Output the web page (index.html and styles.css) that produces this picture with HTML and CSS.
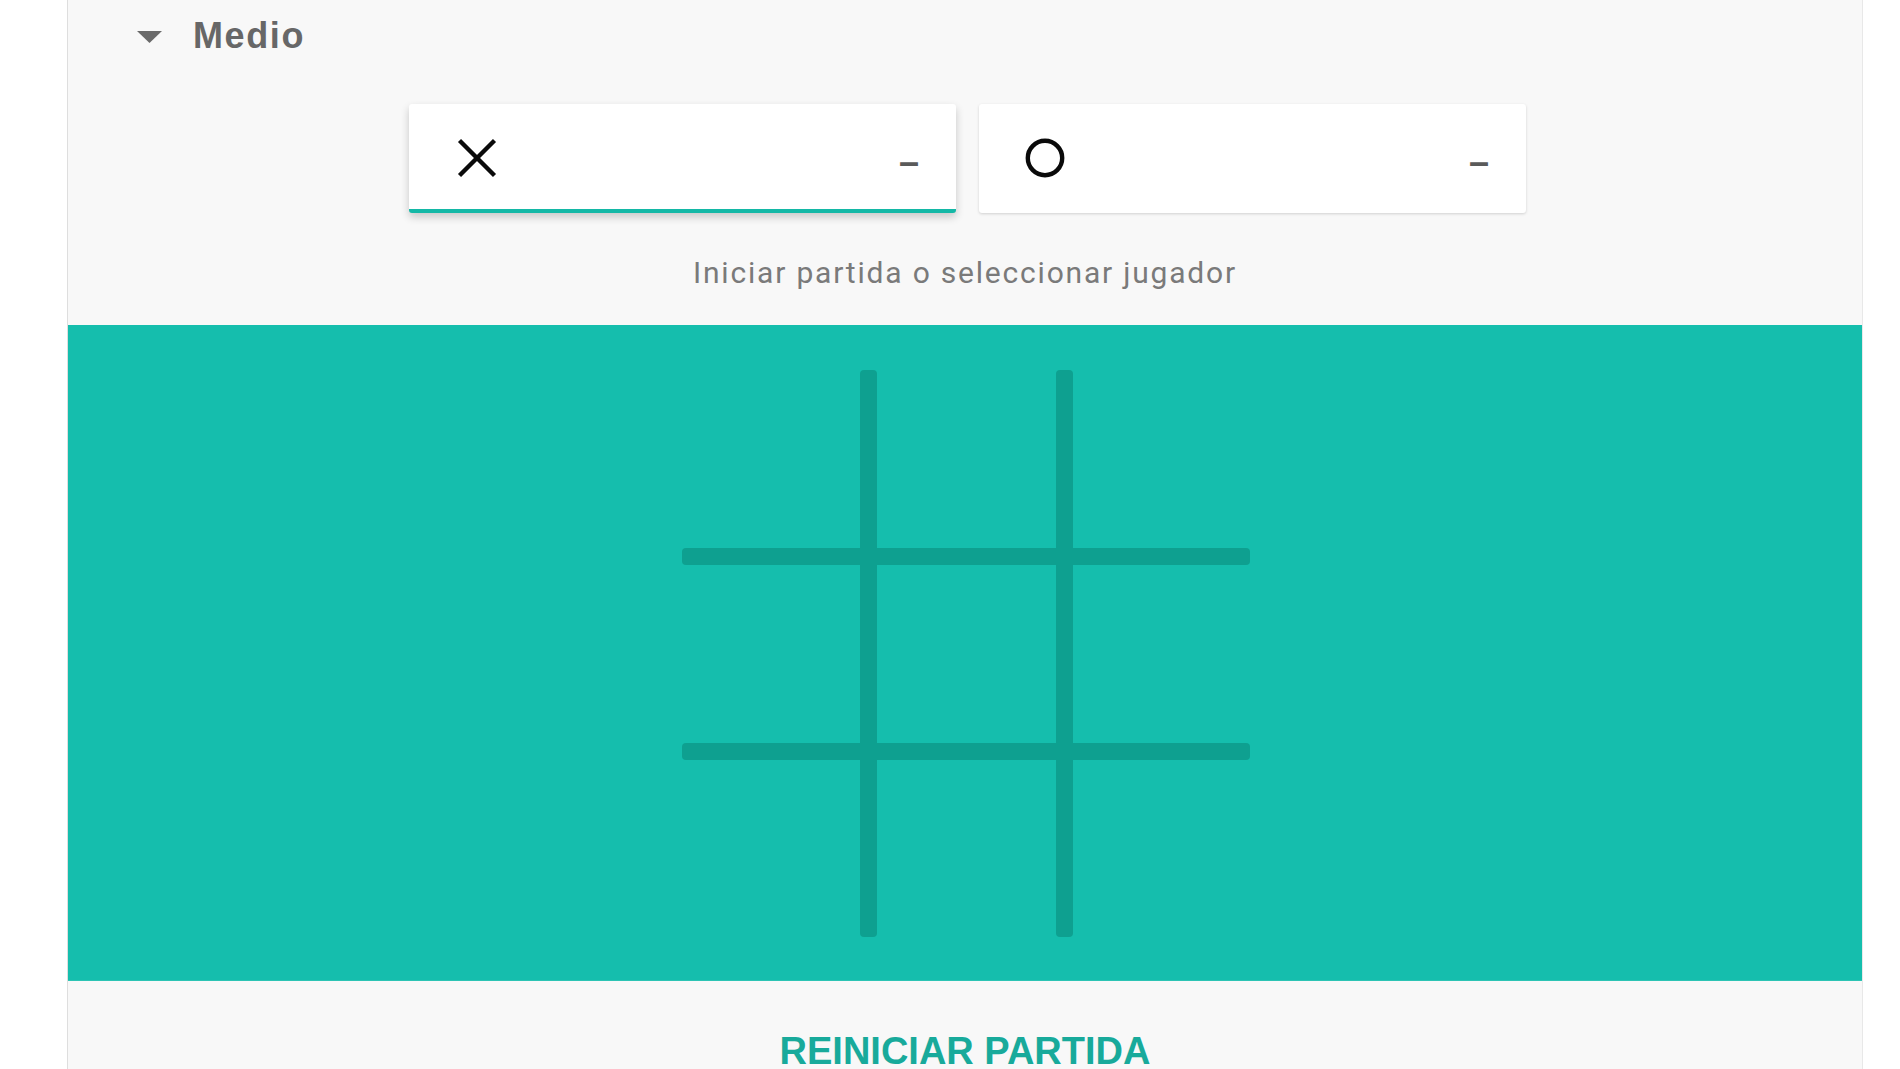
FILE: index.html
```html
<!DOCTYPE html>
<html lang="es">
<head>
<meta charset="utf-8">
<title>Tres en raya</title>
<link rel="stylesheet" href="styles.css">
</head>
<body>
<div class="panel">
  <div class="header">
    <svg class="caret" width="25" height="12" viewBox="0 0 25 12"><polygon points="0,0 25,0 12.5,12" fill="#6a6a6a"/></svg>
    <span class="level">Medio</span>
  </div>
  <div class="players">
    <div class="card active">
      <svg class="mark" width="40" height="40" viewBox="0 0 40 40"><line x1="2.5" y1="2.5" x2="37.5" y2="37.5" stroke="#0a0a0a" stroke-width="4.4"/><line x1="37.5" y1="2.5" x2="2.5" y2="37.5" stroke="#0a0a0a" stroke-width="4.4"/></svg>
      <span class="score">–</span>
    </div>
    <div class="card o">
      <svg class="mark" width="40" height="40" viewBox="0 0 40 40"><circle cx="20" cy="20" r="17.2" fill="none" stroke="#0a0a0a" stroke-width="4.4"/></svg>
      <span class="score">–</span>
    </div>
  </div>
  <div class="hint">Iniciar partida o seleccionar jugador</div>
  <div class="board">
    <svg class="grid" width="568" height="567" viewBox="0 0 568 567">
      <rect x="178" y="0" width="17" height="567" rx="4" fill="#0ea090"/>
      <rect x="374" y="0" width="17" height="567" rx="4" fill="#0ea090"/>
      <rect x="0" y="178" width="568" height="17" rx="4" fill="#0ea090"/>
      <rect x="0" y="373" width="568" height="17" rx="4" fill="#0ea090"/>
    </svg>
  </div>
  <div class="footer">
    <span class="restart">REINICIAR PARTIDA</span>
  </div>
</div>
</body>
</html>
```
FILE: styles.css
```css
html, body {
  margin: 0;
  padding: 0;
  background: #ffffff;
}
body {
  font-family: "Liberation Sans", Arial, sans-serif;
  overflow: hidden;
}
.panel {
  margin-left: 67px;
  width: 1796px;
  box-sizing: border-box;
  background: #f8f8f8;
  border-left: 1px solid #dedede;
  border-right: 1px solid #e8e8e8;
  min-height: 1069px;
}
.header {
  display: flex;
  align-items: center;
  padding-left: 69px;
  padding-top: 16px;
  height: 39px;
}
.caret {
  margin-top: 3px;
  margin-right: 31px;
}
.level {
  font-family: "Liberation Sans", Arial, sans-serif;
  font-weight: bold;
  font-size: 36px;
  line-height: 39px;
  letter-spacing: 1.6px;
  color: #676767;
}
.players {
  display: flex;
  justify-content: center;
  gap: 23px;
  margin-top: 49px;
  padding-left: 5px;
}
.card {
  width: 547px;
  height: 109px;
  box-sizing: border-box;
  background: #ffffff;
  border-radius: 3px;
  border-bottom: 4px solid transparent;
  display: flex;
  align-items: center;
  padding-top: 3px;
  padding-left: 48px;
  padding-right: 37px;
  box-shadow: 0 1px 3px rgba(0,0,0,0.16);
}
.card.o {
  padding-left: 46px;
}
.card.active {
  border-bottom-color: #14b8a6;
  box-shadow: 0 4px 8px rgba(0,0,0,0.2);
}
.mark {
  display: block;
}
.score {
  margin-left: auto;
  margin-top: 8px;
  font-family: "Liberation Sans", Arial, sans-serif;
  font-weight: bold;
  font-size: 36px;
  color: #5a5a5a;
}
.hint {
  margin-top: 42px;
  text-align: center;
  font-family: Roboto, "Liberation Sans", sans-serif;
  font-size: 30px;
  line-height: 35px;
  letter-spacing: 1.8px;
  color: #7a7a7a;
  margin-bottom: 35px;
}
.board {
  height: 656px;
  box-sizing: border-box;
  background: #15bead;
  padding-top: 45px;
  display: flex;
  justify-content: center;
  border-bottom: 1px solid #2cc4b4;
}
.grid {
  display: block;
  margin-left: 2px;
}
.footer {
  padding-top: 48px;
  text-align: center;
}
.restart {
  font-family: "Liberation Sans", Arial, sans-serif;
  font-weight: bold;
  font-size: 38px;
  line-height: 44px;
  color: #18aa9b;
}
```
